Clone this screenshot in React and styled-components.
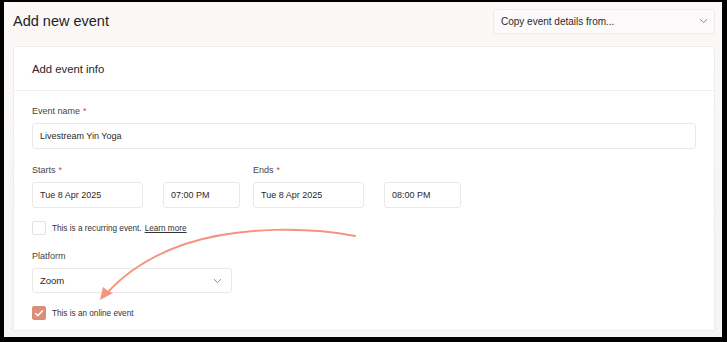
import styled, { createGlobalStyle } from "styled-components";

const GlobalStyle = createGlobalStyle`
  html, body {
    margin: 0;
    padding: 0;
    background: #000;
  }
  body {
    font-family: "Liberation Sans", Arial, sans-serif;
    color: #222;
  }
`;

const Frame = styled.div`
  position: relative;
  width: 727px;
  height: 342px;
  padding: 2px 5px 5px 4px;
  box-sizing: border-box;
  background: #000;
`;

const Page = styled.div`
  height: 100%;
  display: flex;
  flex-direction: column;
  background: linear-gradient(#fcf8f7, #f7f5f5 60%, #f5f5f5);
`;

const Header = styled.header`
  display: flex;
  align-items: center;
  justify-content: space-between;
  box-sizing: border-box;
  height: 38px;
  padding: 0 7px 0 9px;
  flex-shrink: 0;
`;

const Title = styled.h1`
  margin: 0;
  font-size: 14.5px;
  font-weight: 400;
  color: #1e1e1e;
`;

const Select = styled.div`
  display: flex;
  align-items: center;
  justify-content: space-between;
  box-sizing: border-box;
  width: ${(p) => p.$width}px;
  height: ${(p) => p.$height}px;
  padding: 0 ${(p) => p.$pr || 9}px 0 7px;
  background: ${(p) => p.$bg || "#fff"};
  border: 1px solid ${(p) => p.$border || "#ebe8e7"};
  border-radius: 3px;
  font-size: ${(p) => p.$size || 9.5}px;
  color: #2a2a2a;
`;

const Card = styled.section`
  flex: 1;
  margin: 6px 7px 6px 9px;
  background: #fff;
  border: 1px solid #efeceb;
  border-radius: 3px 3px 0 0;
  display: flex;
  flex-direction: column;
`;

const CardHeader = styled.div`
  height: 43px;
  display: flex;
  align-items: center;
  padding-left: 18px;
  border-bottom: 1px solid #f1eeed;
  font-size: 11.3px;
  color: #262626;
`;

const CardBody = styled.div`
  padding: 14px 18px 0 18px;
  display: flex;
  flex-direction: column;
`;

const Field = styled.div`
  display: flex;
  flex-direction: column;
  margin-bottom: ${(p) => p.$mb || 0}px;
`;

const Label = styled.label`
  font-size: 9px;
  line-height: 12px;
  color: #444;
  margin-bottom: 6px;

  span {
    color: #e0423a;
    margin-left: 3px;
  }
`;

const Input = styled.div`
  box-sizing: border-box;
  width: ${(p) => (p.$width ? `${p.$width}px` : "100%")};
  height: 26px;
  display: flex;
  align-items: center;
  padding-left: 7px;
  border: 1px solid #ebe9e8;
  border-radius: 3px;
  font-size: 9px;
  color: #2a2a2a;
`;

const DateRow = styled.div`
  display: flex;
  gap: 13px;
  margin-bottom: 13px;
`;

const Pair = styled.div`
  display: flex;
  gap: 20px;
`;

const CheckRow = styled.div`
  display: flex;
  align-items: center;
  gap: 6px;
  font-size: 8.2px;
  color: #333;
  margin-bottom: ${(p) => p.$mb || 0}px;

  a {
    color: #333;
    text-decoration: underline;
    margin-left: 3px;
  }
`;

const Box = styled.div`
  width: 14px;
  height: 14px;
  box-sizing: border-box;
  border-radius: 2px;
  border: 1px solid ${(p) => (p.$checked ? "#dc8f78" : "#e4e2e1")};
  background: ${(p) => (p.$checked ? "#dc8f78" : "#fff")};
  display: flex;
  align-items: center;
  justify-content: center;
`;

const Overlay = styled.svg`
  position: absolute;
  left: 0;
  top: 0;
  pointer-events: none;
`;

const Chevron = () => (
  <svg width="9" height="6" viewBox="0 0 9 6">
    <path d="M1 1.2 L4.5 4.6 L8 1.2" fill="none" stroke="#8a8a8a" strokeWidth="1" />
  </svg>
);

const Tick = () => (
  <svg width="10" height="8" viewBox="0 0 10 8">
    <path d="M1.2 4.2 L3.8 6.6 L8.8 1.4" fill="none" stroke="#fff" strokeWidth="1.5" />
  </svg>
);

export default function App() {
  return (
    <>
      <GlobalStyle />
      <Frame>
        <Page>
          <Header>
            <Title>Add new event</Title>
            <Select $width={222} $height={25} $bg="#fcfafa" $border="#efebea" $size={10} $pr={6}>
              Copy event details from...
              <Chevron />
            </Select>
          </Header>
          <Card>
            <CardHeader>Add event info</CardHeader>
            <CardBody>
              <Field $mb={15}>
                <Label>
                  Event name<span>*</span>
                </Label>
                <Input>Livestream Yin Yoga</Input>
              </Field>
              <DateRow>
                <Field>
                  <Label>
                    Starts<span>*</span>
                  </Label>
                  <Pair>
                    <Input $width={111}>Tue 8 Apr 2025</Input>
                    <Input $width={77}>07:00 PM</Input>
                  </Pair>
                </Field>
                <Field>
                  <Label>
                    Ends<span>*</span>
                  </Label>
                  <Pair>
                    <Input $width={111}>Tue 8 Apr 2025</Input>
                    <Input $width={77}>08:00 PM</Input>
                  </Pair>
                </Field>
              </DateRow>
              <CheckRow $mb={15}>
                <Box />
                <span>
                  This is a recurring event.<a>Learn more</a>
                </span>
              </CheckRow>
              <Field $mb={13}>
                <Label>Platform</Label>
                <Select $width={200} $height={25}>
                  Zoom
                  <Chevron />
                </Select>
              </Field>
              <CheckRow>
                <Box $checked>
                  <Tick />
                </Box>
                <span>This is an online event</span>
              </CheckRow>
            </CardBody>
          </Card>
        </Page>
        <Overlay width="727" height="342" viewBox="0 0 727 342">
          <path
            d="M355 236 C 310 227, 240 226, 185 244 C 150 256, 125 273, 107 293"
            fill="none"
            stroke="#f3957f"
            strokeWidth="2"
            strokeLinecap="round"
          />
          <path d="M100 300 L103 287 L108 291 L113 293 Z" fill="#f3957f" />
        </Overlay>
      </Frame>
    </>
  );
}
